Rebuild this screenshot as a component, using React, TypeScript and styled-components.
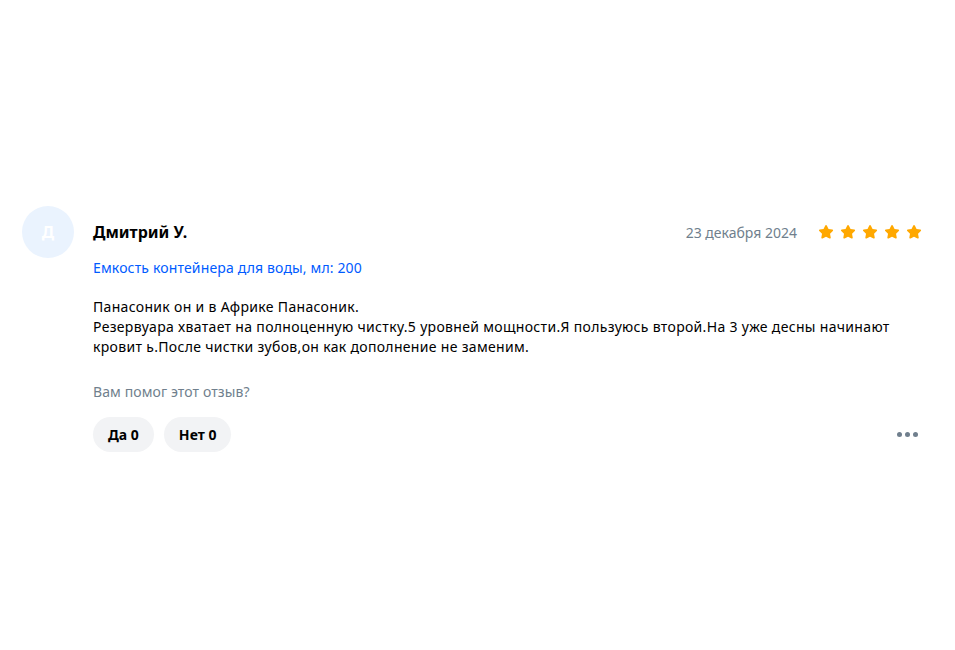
import React from "react";
import styled, { createGlobalStyle } from "styled-components";

const Global = createGlobalStyle`
  html, body { margin: 0; padding: 0; background: #fff; }
  body { font-family: "Noto Sans", "Liberation Sans", sans-serif; color: #001a34; }
`;

const Page = styled.div`
  width: 955px;
  height: 650px;
  box-sizing: border-box;
  padding: 206px 32px 0 22px;
`;

const Review = styled.div`
  display: flex;
  gap: 19px;
`;

const Avatar = styled.div`
  flex: none;
  width: 52px;
  height: 52px;
  border-radius: 50%;
  background: #eaf3fe;
  color: #fff;
  font-weight: 700;
  font-size: 16px;
  display: flex;
  align-items: center;
  justify-content: center;
`;

const Body = styled.div`
  flex: 1;
  display: flex;
  flex-direction: column;
  padding-top: 14px;
`;

const HeadRow = styled.div`
  display: flex;
  align-items: center;
  height: 24px;
`;

const Name = styled.div`
  font-size: 16px;
  font-weight: 700;
  color: #000;
  flex: 1;
`;

const DateText = styled.div`
  font-size: 14px;
  color: #707f8d;
  margin-right: 20px;
`;

const Stars = styled.div`
  display: flex;
  gap: 4px;
`;

const Variant = styled.div`
  margin-top: 14px;
  font-size: 14px;
  letter-spacing: 0.15px;
  color: #005bff;
  line-height: 20px;
`;

const Text = styled.div`
  margin-top: 19px;
  font-size: 14px;
  letter-spacing: 0.32px;
  line-height: 20px;
  color: #000;
`;

const Question = styled.div`
  margin-top: 25px;
  font-size: 14px;
  letter-spacing: 0.1px;
  line-height: 20px;
  color: #707f8d;
`;

const ActionRow = styled.div`
  display: flex;
  align-items: center;
  gap: 10px;
  margin-top: 15px;
`;

const Pill = styled.button`
  border: none;
  background: #f2f3f5;
  border-radius: 18px;
  height: 35px;
  padding: 0 15px;
  font-family: inherit;
  font-size: 14px;
  font-weight: 700;
  color: #000;
`;

const More = styled.div`
  margin-left: auto;
  display: flex;
  gap: 3px;
  padding-right: 5px;
`;

const Dot = styled.span`
  width: 5px;
  height: 5px;
  border-radius: 50%;
  background: #707f8d;
`;

const Star = () => (
  <svg width="18" height="18" viewBox="0 0 24 24">
    <path
      d="M12 2.6c.5 0 .9.3 1.1.7l2.3 4.7 5.1.8c.9.1 1.3 1.3.6 1.9l-3.7 3.6.9 5.1c.2.9-.8 1.6-1.6 1.2L12 18.2l-4.6 2.4c-.8.4-1.8-.3-1.6-1.2l.9-5.1-3.7-3.6c-.7-.6-.3-1.8.6-1.9l5.1-.8 2.3-4.7c.2-.4.6-.7 1-.7z"
      fill="#ffa800"
    />
  </svg>
);

export default function App() {
  return (
    <>
      <Global />
      <Page>
        <Review>
          <Avatar>Д</Avatar>
          <Body>
            <HeadRow>
              <Name>Дмитрий У.</Name>
              <DateText>23 декабря 2024</DateText>
              <Stars>
                {[0, 1, 2, 3, 4].map((i) => (
                  <Star key={i} />
                ))}
              </Stars>
            </HeadRow>
            <Variant>Емкость контейнера для воды, мл: 200</Variant>
            <Text>
              Панасоник он и в Африке Панасоник.
              <br />
              Резервуара хватает на полноценную чистку.5 уровней мощности.Я пользуюсь второй.На 3 уже десны начинают кровит ь.После чистки зубов,он как дополнение не заменим.
            </Text>
            <Question>Вам помог этот отзыв?</Question>
            <ActionRow>
              <Pill>Да 0</Pill>
              <Pill>Нет 0</Pill>
              <More>
                <Dot />
                <Dot />
                <Dot />
              </More>
            </ActionRow>
          </Body>
        </Review>
      </Page>
    </>
  );
}
